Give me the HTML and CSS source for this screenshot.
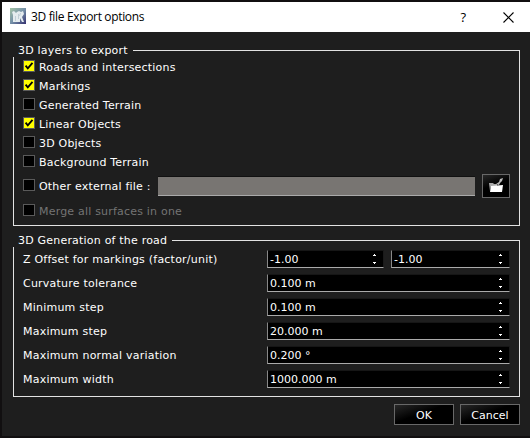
FILE: index.html
```
<!DOCTYPE html>
<html lang="en">
<head>
<meta charset="utf-8">
<title>3D file Export options</title>
<link rel="stylesheet" href="styles.css">
</head>
<body>
<svg width="0" height="0" class="defs" aria-hidden="true">
  <symbol id="check" viewBox="0 0 10 10"><path d="M1.6 4.6 L3.8 7.4 L8.5 1.8" fill="none" stroke="#000" stroke-width="1.8"/></symbol>
  <symbol id="arrows" viewBox="0 0 3 10" shape-rendering="crispEdges"><path d="M1 0h1v1h1v1H0V1h1zM0 8h3v1H2v1H1V9H0z" fill="#fff"/></symbol>
</svg>
<div class="dialog">
  <header class="titlebar">
    <svg class="logo" width="16" height="16" viewBox="0 0 16 16">
      <defs><linearGradient id="lg" x1="0" y1="0" x2="1" y2="1"><stop offset="0" stop-color="#a4c4a4"/><stop offset=".5" stop-color="#7590a8"/><stop offset="1" stop-color="#34306f"/></linearGradient></defs>
      <rect width="16" height="16" fill="url(#lg)"/>
      <path d="M2 4l2-1 2 2 1-1 2-1 2 1 2-1 1 3-2 3 2 5h-2l-2-4v4H3V7z" fill="#e4ebee"/>
      <path d="M5.5 8v5M8.5 6v5M10.5 5l-1 3" stroke="#a9bac6" stroke-width=".6"/>
    </svg>
    <h1>3D file Export options</h1>
    <span class="help">?</span>
    <svg class="close" width="11" height="11" viewBox="0 0 11 11"><path d="M.5.5l10 10M10.5.5l-10 10" stroke="#000" stroke-width="1.1"/></svg>
  </header>
  <main>
    <section class="group layers">
      <h2><span>3D layers to export</span></h2>
      <div class="body">
        <label class="opt"><i class="box on"><svg><use href="#check"/></svg></i><span>Roads and intersections</span></label>
        <label class="opt"><i class="box on"><svg><use href="#check"/></svg></i><span>Markings</span></label>
        <label class="opt"><i class="box"></i><span>Generated Terrain</span></label>
        <label class="opt"><i class="box on"><svg><use href="#check"/></svg></i><span>Linear Objects</span></label>
        <label class="opt"><i class="box"></i><span>3D Objects</span></label>
        <label class="opt"><i class="box"></i><span>Background Terrain</span></label>
        <div class="opt file"><i class="box"></i><span class="file-label">Other external file :</span><div class="path"></div>
          <button class="browse" aria-label="Browse"><svg width="16" height="16" viewBox="0 0 16 16"><path d="M1 5h4l1 1h3v2H3l-1 5z" fill="#aaa"/><path d="M8 6l3-2 1-3 3-1-1 3-2 2-1 2z" fill="#bbb"/><path d="M3 8l12-1-1 7H2z" fill="#fff"/></svg></button>
        </div>
        <label class="opt off"><i class="box"></i><span>Merge all surfaces in one</span></label>
      </div>
    </section>
    <section class="group road">
      <h2><span>3D Generation of the road</span></h2>
      <div class="body">
        <div class="row"><span class="name">Z Offset for markings (factor/unit)</span><div class="spin first"><span>-1.00</span><svg><use href="#arrows"/></svg></div><div class="spin"><span>-1.00</span><svg><use href="#arrows"/></svg></div></div>
        <div class="row"><span class="name">Curvature tolerance</span><div class="spin"><span>0.100 m</span><svg><use href="#arrows"/></svg></div></div>
        <div class="row"><span class="name">Minimum step</span><div class="spin"><span>0.100 m</span><svg><use href="#arrows"/></svg></div></div>
        <div class="row"><span class="name">Maximum step</span><div class="spin"><span>20.000 m</span><svg><use href="#arrows"/></svg></div></div>
        <div class="row"><span class="name">Maximum normal variation</span><div class="spin"><span>0.200 °</span><svg><use href="#arrows"/></svg></div></div>
        <div class="row"><span class="name">Maximum width</span><div class="spin"><span>1000.000 m</span><svg><use href="#arrows"/></svg></div></div>
      </div>
    </section>
    <footer><button>OK</button><button>Cancel</button></footer>
  </main>
</div>
</body>
</html>
```
FILE: styles.css
```
* { box-sizing: border-box; }
body {
  margin: 0;
  height: 438px;
  padding: 2px 0 2px 2px;
  overflow: hidden;
  background: #110f10;
  color: #fff;
  font: 11px/14px Verdana, "DejaVu Sans", sans-serif;
}
.defs { position: absolute; }
.dialog { height: 434px; background: #1e1e1e; }
.titlebar {
  display: flex;
  align-items: center;
  height: 30px;
  padding: 0 16px 0 8px;
  background: #fff;
  color: #000;
}
.logo { margin-top: -2px; }
.titlebar h1 {
  flex: 1;
  margin: 0 0 0 5px;
  font: 12px/16px "Segoe UI", "Open Sans", sans-serif;
  letter-spacing: -0.34px;
}
.help { margin-right: 37px; font: 13px/16px "Segoe UI", "Open Sans", sans-serif; }
main { padding: 11px 10px 0 11px; }
main span { padding-top: 2px; }
.group { display: flex; flex-direction: column; letter-spacing: 0.2px; }
.layers { height: 183px; }
.road { height: 164px; margin-top: 7px; }
.group h2 {
  display: flex;
  align-items: center;
  gap: 5px;
  height: 14px;
  margin: 0;
  padding-left: 5px;
  font: inherit;
  white-space: nowrap;
}
.group h2::after { content: ""; flex: 1; height: 1px; background: #e2e2e2; }
.body {
  flex: 1;
  position: relative;
  border: solid #e2e2e2;
  border-width: 0 1px 1px;
  padding: 0 9px;
}
/* joins the right edge to the title rule */
.body::after { content: ""; position: absolute; right: -1px; top: -7px; width: 1px; height: 7px; background: #e2e2e2; }
.opt { display: flex; align-items: center; gap: 4px; height: 19px; white-space: nowrap; }
.box {
  flex: none;
  width: 12px;
  height: 12px;
  margin-bottom: 1px;
  border: 1px solid #5a5a5a;
  background: #000;
}
.box.on { background: #ff0; }
.box svg { display: block; width: 10px; height: 10px; }
.opt.file { height: 29px; }
.file-label { width: 115px; }
.path {
  width: 317px;
  height: 20px;
  margin-top: 1px;
  border-top: 1px solid #111;
  border-bottom: 1px solid #aaa;
  background: #787572;
}
button {
  height: 21px;
  padding: 2px 0 0;
  border: 1px solid #686868;
  background: linear-gradient(160deg, #282828 0, #000 45%);
  color: #fff;
  font: inherit;
}
.browse { display: grid; place-items: center; width: 28px; height: 24px; margin: 1px 0 0 3px; padding: 0; }
.off { height: 21px; color: #747474; }
.road .body { display: grid; grid-auto-rows: 24px; align-content: start; }
.row { display: flex; align-items: center; }
.name { width: 244px; white-space: nowrap; letter-spacing: 0.22px; }
.spin {
  flex: 1;
  display: flex;
  align-items: center;
  justify-content: space-between;
  height: 18px;
  padding: 0 7px 0 2px;
  border: 1px solid #777;
  border-color: #161616 #1a1a1a #aaa #888;
  background: #000;
  letter-spacing: 0;
}
.spin.first { flex: 0 0 117px; margin-right: 7px; }
.spin svg { width: 3px; height: 10px; }
footer { display: flex; justify-content: flex-end; gap: 6px; margin-top: 7px; }
footer button { width: 60px; }
```
